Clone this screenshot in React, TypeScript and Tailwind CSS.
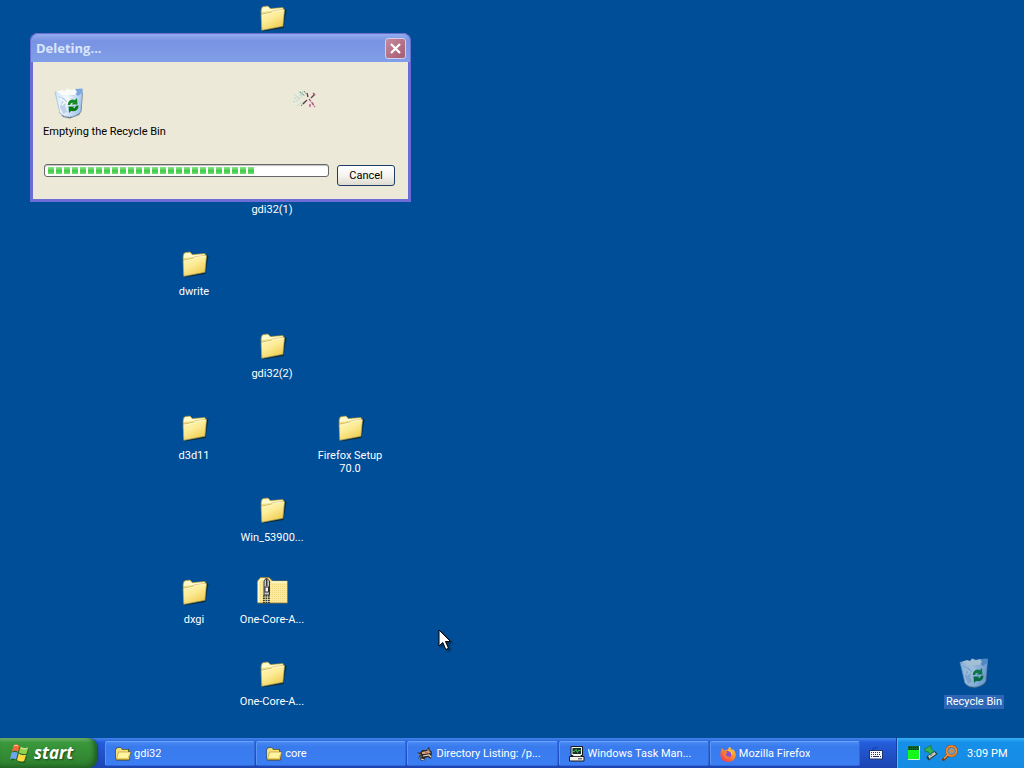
import type { ReactNode } from "react";

const uiFont = "font-['Tahoma','Roboto',sans-serif]";

function FolderIcon() {
  return (
    <svg viewBox="0 0 32 32" className="block h-8 w-8" aria-hidden="true">
      <defs>
        <linearGradient id="folderFront" x1="0" y1="0" x2="0.6" y2="1">
          <stop offset="0" stopColor="#fff8b8" />
          <stop offset="0.5" stopColor="#fcec98" />
          <stop offset="1" stopColor="#f0cc50" />
        </linearGradient>
      </defs>
      <path d="M6 29.500 L27.500 26 L30.500 8 L28.500 6.500 L28 24 L8 28.500Z" fill="#10282c" opacity="0.9" />
      <path d="M5 9 L5.500 6 L7 4.500 L12 4 L14.500 6.500 L27 5.500 L28 8 L26.500 23 L6 27Z" fill="#f3dc7c" stroke="#a58c3c" strokeWidth="0.6" />
      <path d="M6 7 L7.500 5.200 L12 4.800 L14 7.300 L26.500 6.300 L26.500 8 L6 10Z" fill="#fffacb" />
      <path d="M5.200 12.500 L15 10.500 L17 8.700 L28.500 7.500 L26.800 24.300 L5.800 28.300Z" fill="url(#folderFront)" stroke="#b3983f" strokeWidth="0.6" />
      <path d="M6 13 L15.300 11.100 L17.300 9.300 L28 8.200" fill="none" stroke="#fffde0" strokeWidth="0.8" />
    </svg>
  );
}

function ZipFolderIcon() {
  return (
    <svg viewBox="0 0 32 32" className="block h-8 w-8" aria-hidden="true">
      <defs>
        <pattern id="zipDots" width="2" height="2" patternUnits="userSpaceOnUse">
          <rect width="2" height="2" fill="#fbeb9e" />
          <rect width="1" height="1" fill="#f1da80" />
        </pattern>
      </defs>
      <path d="M1.500 27 V5 L4.500 1.500 H13 L16.500 5 H31.500 V27Z" fill="url(#zipDots)" stroke="#8f7a35" strokeWidth="0.8" />
      <path d="M2.500 26 V6 L5 3 H8 M16 6 H31" fill="none" stroke="#fffbd0" strokeWidth="1.500" />
      <path d="M8 19 V5 L10.500 2 L13.500 5 V19Z" fill="#c4c5cb" stroke="#34363c" strokeWidth="1" />
      <path d="M10.700 3 V10" stroke="#34363c" strokeWidth="1.400" />
      <rect x="9" y="11" width="3.500" height="5" fill="#f3f3f5" stroke="#2d2e33" strokeWidth="1" />
      <path d="M7 20 H14 M7 22.200 H14 M7 24.400 H14 M7 26.500 H14" stroke="#34363c" strokeWidth="1.400" strokeDasharray="1.800 0.700" />
    </svg>
  );
}

function RecycleBinIcon() {
  return (
    <svg viewBox="0 0 32 32" className="block h-8 w-8" aria-hidden="true">
      <defs>
        <linearGradient id="binGlass" x1="0" y1="0" x2="1" y2="0.300">
          <stop offset="0" stopColor="#c9e4f8" />
          <stop offset="0.450" stopColor="#f3f9ff" />
          <stop offset="1" stopColor="#a9c9ee" />
        </linearGradient>
      </defs>
      <path d="M6 25 L10 30 L17 31.500 L26 28 L28.500 24 L30 5 L27 8 L25 26 L18 29Z" fill="#4c6376" opacity="0.850" />
      <path d="M2 5 L9 7 L21 8 L29.500 2.500 L27.500 24 Q26 28 17 30 Q10 30 7 26Z" fill="url(#binGlass)" stroke="#9bb9d7" strokeWidth="0.7" />
      <path d="M3 5 L9 3 L12 4 L14 1.500 L18 3 L22 2 L28 3 L22 8 L9 8Z" fill="#f9fcf8" />
      <path d="M22 2 L29.500 1.500 L29 6 L25 9 L22.500 7 L24 5Z" fill="#7ca8df" />
      <path d="M5 9 L9 14 L7 20 L10 27 L14 25 L12 19 L14 14 L11 11Z" fill="#a9c0df" opacity="0.700" />
      <path d="M7 11 L12 15 L9 18 M14 11 L17 13 L13 17" fill="none" stroke="#ffffff" strokeWidth="1.400" />
      <path d="M14.800 18 Q14.800 13 19.500 12.500 L22 13 L24 11 L24.500 17.500 L18.500 17.500 L20.300 15.700 Q17.500 15.500 17 18Z" fill="#168b24" />
      <path d="M25.500 18.500 Q25.500 23.500 20.500 24.300 L18 24 L16 26 L15.500 19.500 H21.500 L19.800 21.300 Q22.500 21.300 23 18.700Z" fill="#087a18" />
    </svg>
  );
}

function SparkleIcon() {
  return (
    <svg viewBox="0 0 26 20" className="block h-5 w-[26px]" fill="none" aria-hidden="true">
      <g stroke="#a9dcd0" strokeWidth="1" strokeDasharray="2 1">
        <path d="M2 4 L8 9 M7 1 L9 7 M1 12 L7 10 M5 16 L10 12 M11 1 L9 8 M2 8 H8" />
      </g>
      <path d="M8 2 L13 6 M9 16 L13 11 M12 1 L14 4" stroke="#607f80" strokeDasharray="2 1" />
      <path d="M15 3 L16 7 M19 8 L23 4 M15 10 L11 14" stroke="#5a4052" strokeWidth="1.300" />
      <path d="M17 9 L22 15 M18 14 L18 17 M21 3 L23 5 M20 13 L23 17" stroke="#b5507f" strokeWidth="1.300" strokeDasharray="3 1" />
    </svg>
  );
}

function WindowsLogo() {
  return (
    <svg viewBox="0 0 20 20" className="h-5 w-5" aria-hidden="true">
      <g opacity="0.45" transform="translate(1 1)">
        <path d="M3 2 Q6 0 9 3 L8 9 Q5 7 2 9Z M10 4 Q14 6 18 4 L16 11 Q12 12 9 10Z M1 10 Q5 8 8 10 L6 17 Q3 15 0 17Z M9 11 Q12 13 16 12 L14 19 Q10 20 7 18Z" fill="#0f3817" />
      </g>
      <path d="M3.500 2 Q7 0 9.500 3 L8 9 Q5 7 2 8.500Z" fill="#f26a3b" />
      <path d="M10.500 3.500 Q14 6 18.500 4 L16.500 10.500 Q13 12 9 9.500Z" fill="#91d14f" />
      <path d="M1.700 9.600 Q5 8 7.700 10 L6 16.500 Q3 14.700 0 16Z" fill="#6ca6f5" />
      <path d="M8.700 10.700 Q12 13 16 11.700 L14.200 18 Q10.500 19.500 7 17Z" fill="#ffd943" />
      <path d="M4 3 Q6 1.500 8 3 M11 5 Q14 7 17 5.500" fill="none" stroke="#fff0c8" strokeWidth="0.7" />
    </svg>
  );
}

function OpenFolderIcon() {
  return (
    <svg viewBox="0 0 16 16" className="h-4 w-4 shrink-0" aria-hidden="true">
      <path d="M0.500 13 V3 L2 1.500 H6 L7.500 3 H14 V5.500 H15.800 L14.500 14.500 H1.500Z" fill="#43421f" />
      <path d="M1 12.500 V3.500 L2.500 2 H6 L7.200 3.800 H13.200 V12.500Z" fill="#f5df79" />
      <path d="M3.500 6 H15.500 L13.800 13.500 H1.500Z" fill="#fff4a1" stroke="#b18d2b" strokeWidth="0.6" />
      <path d="M2.500 12.500 H13 L14 9" fill="none" stroke="#edcc4e" />
    </svg>
  );
}

function LizardIcon() {
  return (
    <svg viewBox="0 0 16 16" className="h-4 w-4 shrink-0" aria-hidden="true">
      <path d="M0 6 L3 7 L5 4 L9 4 L12 1 L13 4 L15 6 L14 13 L11 11 L8 12 L7 15 L3 14 L4 11 L1 13 L3 9Z" fill="#292927" />
      <path d="M5 6 L10 5 L12 3 L13 7 L9 8 L5 8Z" fill="#d5a17e" />
      <path d="M6 10 L12 9 L14 11 M4 13 L7 14" fill="none" stroke="#f0d7bd" strokeWidth="1.200" />
      <path d="M1 8 L4 9 M2 12 L5 10 M10 3 L14 7" fill="none" stroke="#7b7b70" />
      <path d="M8 7 H11" stroke="#a94430" />
    </svg>
  );
}

function TaskManagerIcon() {
  return (
    <svg viewBox="0 0 16 16" className="h-4 w-4 shrink-0" aria-hidden="true">
      <path d="M2 0.500 H13.500 V9.500 H12 V10.500 H15 V15 H0.500 V10.500 H4 V9.500 H2Z" fill="#f4f1e8" stroke="#17191c" />
      <rect x="3.500" y="2" width="8.500" height="6" fill="#153826" />
      <path d="M4 5.500 H5.500 L7 3.500 L8.500 6.500 L9.500 4.500 H11.500" fill="none" stroke="#56d86c" strokeWidth="0.8" />
      <path d="M4 10.500 H12 M9 12.800 H13" stroke="#383838" />
    </svg>
  );
}

function FirefoxIcon() {
  return (
    <svg viewBox="0 0 16 16" className="h-4 w-4 shrink-0" aria-hidden="true">
      <defs>
        <linearGradient id="foxFlame" x1="1" y1="0" x2="0.200" y2="1">
          <stop offset="0" stopColor="#ffe34c" />
          <stop offset="0.450" stopColor="#ff922f" />
          <stop offset="1" stopColor="#f1364e" />
        </linearGradient>
      </defs>
      <path d="M2 2 L4 4.500 Q5.500 3.500 7.500 4 Q8 2 10 0.500 Q10.500 2.500 12.500 4 L13 3 Q16 6 15.700 9.500 Q15 15.500 8 16 Q1 15.500 0.300 9 Q0.300 5 2 2Z" fill="url(#foxFlame)" />
      <circle cx="7.700" cy="8.500" r="3.500" fill="#8a4fd0" />
      <path d="M4 6 Q6 5 7.500 6.300 L6 7.800 Q5 8.500 6.500 10 Q9 11.500 10.500 10 Q9 13 6 12 Q2.500 10 4 6Z" fill="#ff7a35" />
      <path d="M8 4.500 Q11.500 4.500 12 8.500" fill="none" stroke="#ffce3c" strokeWidth="1.200" />
    </svg>
  );
}

function KeyboardIcon() {
  return (
    <svg viewBox="0 0 14 14" className="h-[14px] w-[14px]" aria-hidden="true">
      <path d="M4 4 V2 H8 V0" fill="none" stroke="#162b63" strokeDasharray="1 1" />
      <rect x="0.500" y="4.500" width="13" height="8.500" fill="#f7f8ff" stroke="#20376c" />
      <path d="M2 6.500 H12 M2 8.500 H12" stroke="#26355d" strokeDasharray="1 1" />
      <path d="M2 10.500 H3 M4 10.500 H10 M11 10.500 H12" stroke="#26355d" />
    </svg>
  );
}

function CpuIcon() {
  return (
    <svg viewBox="0 0 12 14" className="h-[14px] w-3" aria-hidden="true">
      <rect width="12" height="14" fill="#11642a" />
      <rect x="0" y="4" width="11" height="9" fill="#14f81c" />
      <path d="M1 1.500 H11 M1 3.500 H11" stroke="#0b321c" strokeDasharray="1 1" />
      <path d="M11.500 0 V13.500 H0" fill="none" stroke="#d2f3db" />
    </svg>
  );
}

function SafelyRemoveIcon() {
  return (
    <svg viewBox="0 0 16 16" className="h-4 w-4" aria-hidden="true">
      <path d="M4 11 L12 6 L14.500 9 L6 15.500 L3.500 13Z" fill="#263d38" />
      <path d="M5 11 L11.500 7 L13 9 L6.500 13.500Z" fill="#c9d1c5" />
      <path d="M7 11 L9.500 9.500 M6 13.500 L8.500 13" stroke="#697873" />
      <path d="M1.500 4 L8 0.500 L8 3.500 L10.500 6 L7 9.500 L5 6.500 L2.500 7Z" fill="#35b54c" stroke="#176c36" strokeWidth="0.7" />
    </svg>
  );
}

function SearchToolIcon() {
  return (
    <svg viewBox="0 0 16 16" className="h-4 w-4" aria-hidden="true">
      <path d="M5.500 10.500 L1.500 14.500" stroke="#7d3c19" strokeWidth="3" strokeLinecap="round" />
      <circle cx="9.500" cy="6" r="4.900" fill="#62a0c6" stroke="#9c4c1b" strokeWidth="2.800" />
      <circle cx="9.500" cy="6" r="4.900" fill="none" stroke="#f28e31" strokeWidth="1.800" />
      <path d="M6 9.500 L2 13.500" stroke="#f2a13f" strokeWidth="1.500" />
      <circle cx="9.500" cy="6" r="1.800" fill="#d98a45" />
    </svg>
  );
}

type DesktopItemProps = { label: string; place: string; icon?: ReactNode };

function DesktopItem({ label, place, icon = <FolderIcon /> }: DesktopItemProps) {
  return (
    <button type="button" className={`absolute flex w-[78px] flex-col items-center gap-[5px] text-[11px] leading-[13px] text-white ${place}`}>
      {icon}
      <span className="max-w-[74px]">{label}</span>
    </button>
  );
}

const desktopItems: DesktopItemProps[] = [
  { label: "gdi32", place: "left-[233px] top-[2px]" },
  { label: "gdi32(1)", place: "left-[233px] top-[166px]" },
  { label: "dwrite", place: "left-[155px] top-[248px]" },
  { label: "gdi32(2)", place: "left-[233px] top-[330px]" },
  { label: "d3d11", place: "left-[155px] top-[412px]" },
  { label: "Firefox Setup 70.0", place: "left-[311px] top-[412px]" },
  { label: "Win_53900...", place: "left-[233px] top-[494px]" },
  { label: "dxgi", place: "left-[155px] top-[576px]" },
  { label: "One-Core-A...", place: "left-[233px] top-[576px]", icon: <ZipFolderIcon /> },
  { label: "One-Core-A...", place: "left-[233px] top-[658px]" },
];

function DeletingDialog() {
  return (
    <section
      role="dialog"
      aria-labelledby="dialog-title"
      className="absolute left-[30px] top-[33px] z-10 w-[381px] rounded-t-lg border-[3px] border-t-0 border-[#6c6cd6] bg-[#ece9d8] text-[11px] text-black"
    >
      <header className="-mx-[3px] flex h-[29px] items-center justify-between rounded-t-lg border-x border-t border-[#6670cc] bg-linear-to-b from-[#94acf0] via-[#7893e2] via-25% to-[#819fe8] pt-px pr-1 pl-[5px]">
        <h1 id="dialog-title" className="font-['Trebuchet_MS','Open_Sans',sans-serif] text-[13px] font-bold text-[#d9e5fb]">
          Deleting...
        </h1>
        <button type="button" aria-label="Close" className="flex h-[21px] w-[21px] items-center justify-center rounded-[3px] border border-[#d7cdec] bg-linear-to-br from-[#c58a9e] to-[#a55b70]">
          <svg viewBox="0 0 13 13" className="h-[13px] w-[13px]" aria-hidden="true">
            <path d="M2 2 L11 11 M11 2 L2 11" stroke="white" strokeWidth="2.200" />
          </svg>
        </button>
      </header>
      <div className="pt-[25px] pr-[13px] pb-[13px] pl-[10px]">
        <div className="flex h-8 items-start justify-between pr-[77px] pl-[10px]">
          <RecycleBinIcon />
          <div className="pt-[3px]"><SparkleIcon /></div>
        </div>
        <p className="mt-1.5 leading-[14px]">Emptying the Recycle Bin</p>
        <div className="mt-[25px] flex items-start gap-2">
          <div
            role="progressbar"
            aria-label="Emptying the Recycle Bin"
            aria-valuenow={74}
            className="ml-px flex h-[13px] flex-1 items-center gap-0.5 rounded-[3px] border border-[#686868] bg-white px-[3px] shadow-[inset_0_1px_1px_#bebebe]"
          >
            {Array.from({ length: 26 }, (_, i) => (
              <span key={i} className="h-[7px] w-1.5 bg-linear-to-b from-[#8de88d] via-[#3ecb45] to-[#6ada6c]" />
            ))}
          </div>
          <button type="button" className="mt-px h-[21px] w-[58px] rounded-[3px] border border-[#1d3c66] bg-linear-to-b from-white via-[#f5f4ef] to-[#dedbd0] pt-0.5">
            Cancel
          </button>
        </div>
      </div>
    </section>
  );
}

const tasks: { label: string; icon: ReactNode }[] = [
  { label: "gdi32", icon: <OpenFolderIcon /> },
  { label: "core", icon: <OpenFolderIcon /> },
  { label: "Directory Listing: /p...", icon: <LizardIcon /> },
  { label: "Windows Task Man...", icon: <TaskManagerIcon /> },
  { label: "Mozilla Firefox", icon: <FirefoxIcon /> },
];

function Taskbar() {
  return (
    <footer className="flex h-[30px] items-stretch bg-linear-to-b from-[#4284ec] via-[#245ddb] via-15% to-[#1c44b2] text-[11px] text-white">
      <button
        type="button"
        className="flex w-[97px] items-center gap-1 rounded-r-[9px] bg-linear-to-b from-[#70b570] via-[#3b983b] via-15% to-[#2d7f2d] pl-2.5 shadow-[inset_-3px_-2px_4px_#205f25,1px_0_2px_#173e91]"
      >
        <WindowsLogo />
        <span className="font-['Open_Sans',sans-serif] text-[17px] leading-5 font-bold italic [text-shadow:1px_1px_2px_#174619]">start</span>
      </button>
      <nav aria-label="Open windows" className="flex flex-1 gap-px pt-[3px] pb-[2px] pl-2">
        {tasks.map((task) => (
          <button
            key={task.label}
            type="button"
            className="flex min-w-0 flex-1 items-center gap-[3px] rounded-[2px] border border-[#3267d8] border-t-[#69a2fb] border-l-[#5b95f5] bg-linear-to-b from-[#4a8af6] via-[#397bed] via-20% to-[#3b7ef3] pl-[9px]"
          >
            {task.icon}
            <span className="truncate pt-0.5">{task.label}</span>
          </button>
        ))}
      </nav>
      <button type="button" aria-label="Keyboard layout" className="flex w-9 items-center justify-center pr-1">
        <KeyboardIcon />
      </button>
      <div className="flex w-[128px] items-center gap-[3px] border-l border-[#123f9e] bg-linear-to-b from-[#35b1f5] via-[#1590e8] via-15% to-[#168be4] pl-[11px] shadow-[inset_1px_0_0_#45c1fb]">
        <CpuIcon />
        <SafelyRemoveIcon />
        <SearchToolIcon />
        <time dateTime="15:09" className="ml-1.5 pt-0.5">3:09 PM</time>
      </div>
    </footer>
  );
}

export default function App() {
  return (
    <div className={`flex min-h-screen flex-col bg-[#004e98] ${uiFont}`}>
      <main className="relative flex-1 overflow-hidden">
        {desktopItems.map((item) => (
          <DesktopItem key={item.place} {...item} />
        ))}
        <DeletingDialog />
        <button type="button" className="absolute right-3 bottom-[29px] flex w-[76px] flex-col items-center gap-1.5 text-[11px] leading-[14px] text-white">
          <span className="opacity-65"><RecycleBinIcon /></span>
          <span className="bg-[#2c66b5] px-0.5">Recycle Bin</span>
        </button>
        <svg viewBox="0 0 14 22" className="absolute top-[629px] left-[438px] h-[22px] w-[14px] drop-shadow-[2px_2px_1px_#00000066]" aria-hidden="true">
          <path d="M1 1 V17 L4.800 13.500 L7.800 20.500 L10.500 19.300 L7.500 12.500 H12.500Z" fill="white" stroke="black" strokeWidth="1" />
        </svg>
      </main>
      <Taskbar />
    </div>
  );
}
